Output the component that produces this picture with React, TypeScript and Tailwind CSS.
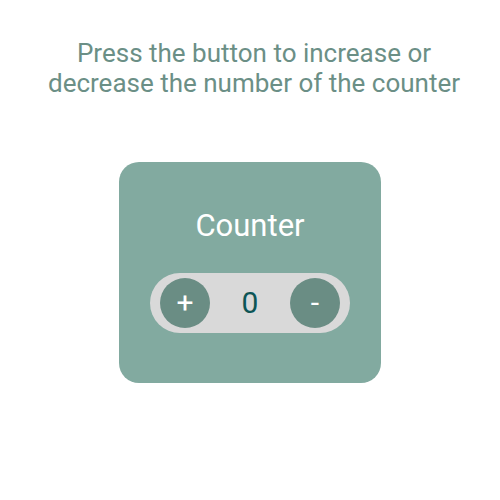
import React, { useState } from "react";

export default function App() {
  const [count, setCount] = useState(0);
  return (
    <div
      className="w-[500px] h-[500px] bg-white flex flex-col items-center"
      style={{ fontFamily: "Roboto, 'Noto Sans', sans-serif" }}
    >
      <p className="pt-[38px] pl-[8px] text-center text-[26px] leading-[30px] text-[#6b8f86]">
        Press the button to increase or
        <br />
        decrease the number of the counter
      </p>
      <div className="mt-[64px] w-[262px] h-[221px] rounded-[20px] bg-[#82aaa0] flex flex-col items-center">
        <h1 className="pt-[46px] text-[31px] leading-[36px] text-white">Counter</h1>
        <div className="mt-[29px] w-[200px] h-[60px] rounded-full bg-[#d9d9d9] flex items-center justify-between px-[10px]">
          <button
            onClick={() => setCount(count + 1)}
            className="w-[50px] h-[50px] rounded-full bg-[#6a8d84] text-white text-[30px] leading-none flex items-center justify-center"
          >
            +
          </button>
          <span className="text-[30px] leading-none text-[#0d5656]">{count}</span>
          <button
            onClick={() => setCount(count - 1)}
            className="w-[50px] h-[50px] rounded-full bg-[#6a8d84] text-white text-[30px] leading-none flex items-center justify-center"
          >
            -
          </button>
        </div>
      </div>
    </div>
  );
}
